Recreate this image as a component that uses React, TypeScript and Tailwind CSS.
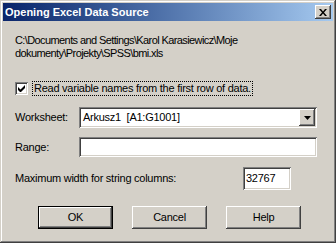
const sunken =
  'bg-white shadow-[inset_1px_1px_#808080,inset_-1px_-1px_#ffffff,inset_2px_2px_#404040,inset_-2px_-2px_#d4d0c8]';
const raised =
  'bg-[#d4d0c8] shadow-[inset_-1px_-1px_#404040,inset_1px_1px_#ffffff,inset_-2px_-2px_#808080,inset_2px_2px_#d4d0c8]';

function Button({ label, primary }: { label: string; primary?: boolean }) {
  return (
    <div className={`w-[75px] h-[23px] ${primary ? 'border border-black' : ''}`}>
      <button
        className={`w-full h-full flex items-center justify-center text-[11px] text-black ${raised}`}
      >
        {label}
      </button>
    </div>
  );
}

export default function App() {
  return (
    <div
      className="w-[336px] h-[243px] bg-[#d4d0c8] p-[3px] text-black tracking-[-0.25px] shadow-[inset_-1px_-1px_#404040,inset_1px_1px_#d4d0c8,inset_-2px_-2px_#808080,inset_2px_2px_#ffffff] overflow-hidden"
      style={{ fontFamily: '"Liberation Sans", Arial, sans-serif' }}
    >
      {/* title bar */}
      <div className="h-[18px] flex items-center justify-between pl-[2px] pr-[2px] bg-gradient-to-r from-[#0a246a] to-[#a6caf0]">
        <span className="text-white font-bold text-[11px] leading-none tracking-normal">
          Opening Excel Data Source
        </span>
        <div className={`w-[16px] h-[14px] flex items-center justify-center ${raised}`}>
          <svg width="8" height="7" viewBox="0 0 8 7">
            <path d="M0 0h2l2 2.5L6 0h2L5 3.5 8 7H6L4 4.5 2 7H0l3-3.5z" fill="#000" />
          </svg>
        </div>
      </div>

      <div className="pl-[12px] pr-[16px]">
        <p className="mt-[13px] text-[11px] leading-[13px] tracking-[-0.6px]">
          C:\Documents and Settings\Karol Karasiewicz\Moje
          <br />
          dokumenty\Projekty\SPSS\bmi.xls
        </p>

        {/* checkbox row */}
        <div className="mt-[21px] flex items-center h-[15px]">
          <div className={`w-[13px] h-[13px] flex items-center justify-center ${sunken}`}>
            <svg width="7" height="7" viewBox="0 0 7 7">
              <path d="M0 2v3l2 2h1l4-4V0L2.5 4.5z" fill="#000" />
            </svg>
          </div>
          <span className="ml-[4px] px-[1px] h-[15px] flex items-center border border-dotted border-black text-[11px]">
            Read variable names from the first row of data.
          </span>
        </div>

        {/* worksheet */}
        <div className="mt-[11px] flex items-center h-[21px]">
          <span className="w-[64px] text-[11px]">Worksheet:</span>
          <div className={`flex-1 h-full flex items-center pl-[4px] pr-[2px] ${sunken}`}>
            <span className="flex-1 text-[11px]">Arkusz1&nbsp; [A1:G1001]</span>
            <div className={`w-[16px] h-[17px] flex items-center justify-center ${raised}`}>
              <svg width="7" height="4" viewBox="0 0 7 4">
                <path d="M0 0h7L3.5 4z" fill="#000" />
              </svg>
            </div>
          </div>
        </div>

        {/* range */}
        <div className="mt-[9px] flex items-center h-[20px]">
          <span className="w-[64px] text-[11px]">Range:</span>
          <div className={`flex-1 h-full ${sunken}`} />
        </div>

        {/* max width */}
        <div className="mt-[10px] flex items-center h-[23px]">
          <span className="w-[228px] text-[11px]">Maximum width for string columns:</span>
          <div className={`w-[48px] h-full flex items-center pl-[3px] text-[11px] ${sunken}`}>32767</div>
        </div>

        {/* buttons */}
        <div className="mt-[16px] flex pl-[23px] gap-[19px]">
          <Button label="OK" primary />
          <Button label="Cancel" />
          <Button label="Help" />
        </div>
      </div>
    </div>
  );
}
